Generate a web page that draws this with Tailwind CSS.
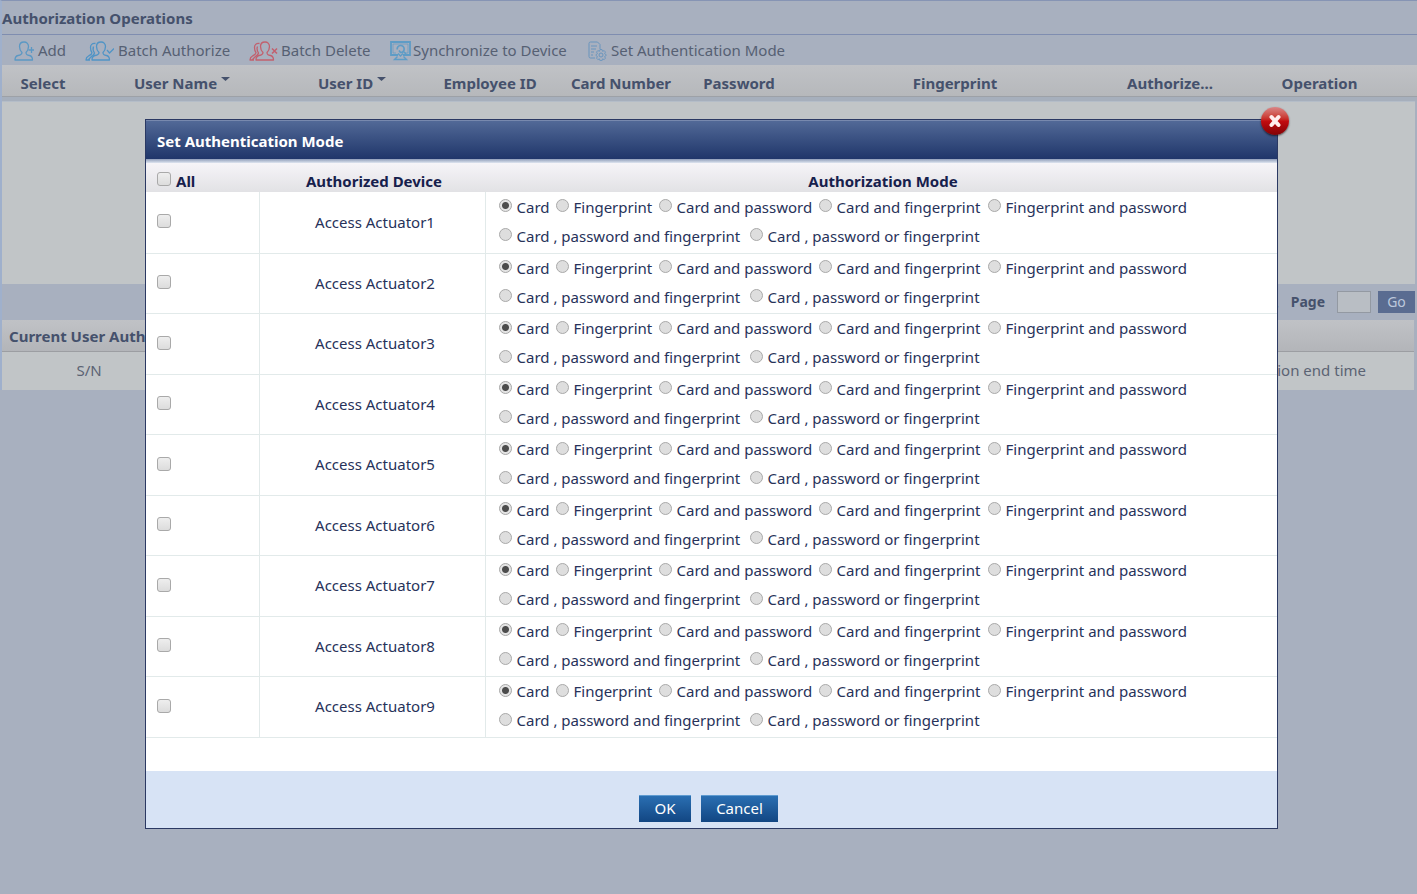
<!DOCTYPE html>
<html lang="en">
<head>
<meta charset="utf-8">
<title>Authorization Operations</title>
<script src="https://cdn.jsdelivr.net/npm/@tailwindcss/browser@4"></script>
</head>
<body class="min-h-screen overflow-x-hidden bg-[#a8b0bf] font-['Noto_Sans','Open_Sans',sans-serif] text-[15px] text-[#4f5a70]">
<svg class="hidden" aria-hidden="true">
  <defs>
    <g id="person" fill="none" stroke="currentColor" stroke-width="1.3" stroke-linejoin="round">
      <path d="M10 1C7.500 1 5.500 2.500 5.500 5.500C5.500 8.500 6.500 10 8 11.500C8 13.500 7 14 4 14.500C1.500 15 1 16 1 19H18.500C18.500 16 18 15 15.500 14.500C12.500 14 12 13.500 12 11.500C13.500 10 14.500 8.500 14.500 5.500C14.500 2.500 12.500 1 10 1Z"/>
    </g>
    <path id="person-back" fill="none" stroke="currentColor" stroke-width="1.3" stroke-linejoin="round" d="M10.500 2.500C7 2 5.500 4 5.500 6.500C5.500 9 6 10.500 7 11.500C7 13.500 5.500 14 3.500 15C1.500 16 1 17 1 19H5M8.500 5.500C7.500 8 8.500 10.500 9.500 12C9 14 8 14 6.500 15.500L3 19"/>
  </defs>
</svg>

<main class="border-t border-l-2 border-t-[#8694b4] border-l-[#9fb0cc]">
  <h1 class="flex h-[34px] items-center border-b border-[#7f8db0] pt-px font-bold text-[#45516c]">Authorization Operations</h1>
  <nav class="flex h-[30px] items-center pt-px pl-3 text-[#566073]" aria-label="Operations">
    <button class="flex w-[71px] items-center gap-1 whitespace-nowrap">
      <svg class="h-5 w-5 shrink-0 text-[#5b98c4]" viewBox="0 0 20 20"><use href="#person"/><path d="M17.500 6v6M14.500 9h5.500" stroke="currentColor" stroke-width="1.300"/></svg>Add</button>
    <button class="flex w-[164px] items-center gap-1 whitespace-nowrap">
      <svg class="h-5 w-[29px] shrink-0 text-[#5094c6]" viewBox="0 0 29 20"><use href="#person-back"/><use href="#person" x="6"/><path d="M22 9l2.500 3L29 7.500" fill="none" stroke="currentColor" stroke-width="1.300"/></svg>Batch Authorize</button>
    <button class="flex w-[141px] items-center gap-[3px] whitespace-nowrap">
      <svg class="h-5 w-[29px] shrink-0 text-[#c2606e]" viewBox="0 0 29 20"><use href="#person-back"/><use href="#person" x="6"/><path d="M23 7.500l5 5M28 7.500l-5 5" stroke="currentColor" stroke-width="1.500"/></svg>Batch Delete</button>
    <button class="flex w-[198px] items-center gap-[2px] whitespace-nowrap">
      <svg class="h-5 w-[21px] shrink-0 text-[#5e9cc6]" viewBox="0 0 21 20" fill="none" stroke="currentColor"><path d="M8 14H1V1h19v13h-7" stroke-width="1.800"/><path d="M6 12H3V3h15v9h-3" stroke-width=".7"/><path d="M7.200 8.500A3.500 3.500 0 1 1 10.500 11.500L9 9.500M13 10l3 3" stroke-width="1.700"/><path d="M7.500 15.500L4.500 18.500H16.500L13.500 15.500M8 12.500L10.500 15L13 12.500" stroke-width="1.400"/></svg>Synchronize to Device</button>
    <button class="flex items-center gap-1 whitespace-nowrap">
      <svg class="h-5 w-[19px] shrink-0 text-[#6894bd]" viewBox="0 0 19 20" fill="none" stroke="currentColor"><path d="M7 17H2.500Q1 17 1 15.500V2.500Q1 1 2.500 1H9.500L12 3.500V8M3 5h6M3 8h5M3 11h3M3 14h2"/><path d="M12 8.500h2l.5 1.800 1.700-.7 1.300 1.500-1 1.500 1.600 1v1l-1.600 1 1 1.500-1.300 1.500-1.700-.7-.5 1.800h-2l-.5-1.800-1.700.7-1.300-1.500 1-1.500-1.500-1v-1l1.500-1-1-1.500 1.300-1.500 1.700.7z" stroke-width=".9"/><circle cx="13" cy="14" r="2"/></svg>Set Authentication Mode</button>
  </nav>

  <table class="w-full table-fixed">
    <colgroup><col class="w-[82px]"><col class="w-[196px]"><col class="w-[144px]"><col class="w-[132px]"><col class="w-[130px]"><col class="w-[106px]"><col class="w-[326px]"><col class="w-[104px]"><col class="w-[195px]"></colgroup>
    <thead class="bg-linear-to-b from-[#c0c2c6] to-[#b6b8bb] text-[#45516c]">
      <tr class="h-[31px] border-b border-[#9da1a7] *:p-0 *:pt-[6px]">
        <th>Select</th>
        <th><span class="inline-flex items-start gap-1">User Name<svg class="mt-[5px] h-1 w-[9px]" viewBox="0 0 9 4"><path d="M0 0h9L4.500 4z" fill="currentColor"/></svg></span></th>
        <th><span class="inline-flex items-start gap-1">User ID<svg class="mt-[5px] h-1 w-[9px]" viewBox="0 0 9 4"><path d="M0 0h9L4.500 4z" fill="currentColor"/></svg></span></th>
        <th>Employee ID</th><th>Card Number</th><th>Password</th><th>Fingerprint</th><th>Authorize...</th><th>Operation</th>
      </tr>
    </thead>
  </table>
  <div class="h-1 bg-[#a6afbc]"></div>
  <div class="mr-[2px] h-[183px] border-t border-[#b4bdc8] bg-[#c1c5c7]"></div>

  <form class="flex h-9 items-center justify-end gap-3 pt-px pr-[2px]">
    <span class="font-bold">.</span>
    <label for="page" class="text-sm font-bold text-[#45516c]">Page</label>
    <span class="flex items-center gap-[7px]">
      <input id="page" type="text" class="h-[22px] w-[34px] border border-[#9399a2] bg-[#b9bec4] px-1">
      <button type="button" class="h-[22px] w-[37px] bg-[#5a6c91] text-sm text-[#bcc8dc]">Go</button>
    </span>
  </form>

  <section class="mr-[3px]">
    <h2 class="flex h-8 items-center border-b border-[#9c9ea2] bg-linear-to-b from-[#c0c2c6] to-[#b3b5b9] pt-[3px] pl-[7px] font-bold text-[#45516c]">Current User Authorization</h2>
    <table class="w-full table-fixed bg-[#c1c5c7]">
      <tr class="h-[38px] text-[#5b6373] *:font-normal"><th class="w-[174px]">S/N</th><th></th><th class="pr-12 text-right">Authorization end time</th></tr>
    </table>
  </section>
</main>

<!-- Modal layer -->
<div class="absolute inset-x-0 top-[119px] pr-[139px] pl-[145px]">
  <section role="dialog" aria-labelledby="dialog-title" class="relative border border-[#2b3963] bg-white text-[#27325a]">
    <header class="flex h-[39px] items-center border-t border-[#7889ae] bg-linear-to-b from-[#526997] to-[#20366a] pt-[2px] pl-[11px] text-white">
      <h2 id="dialog-title" class="font-bold">Set Authentication Mode</h2>
    </header>
    <button aria-label="Close" class="absolute -top-[13px] -right-[12px] h-7 w-7 rounded-full bg-linear-to-b from-[#d98586] via-[#c30c10] to-[#820306] shadow-[0_1px_2px_#00000099]">
      <svg viewBox="0 0 28 28" class="h-7 w-7"><path d="M10.500 10l7 8M17.500 10l-7 8" stroke="#ffeded" stroke-width="4" stroke-linecap="round"/></svg>
    </button>
    <div class="h-1 bg-linear-to-b from-[#8f9db9] to-[#dfe5f0]"></div>
    <table class="w-full table-fixed">
      <colgroup><col class="w-[113px]"><col class="w-[226px]"><col></colgroup>
      <thead class="bg-linear-to-b from-[#f6f4f8] to-[#e2e2e5] text-[#16204c]">
        <tr class="h-[29px] *:p-0 *:pt-[6px] *:leading-[22px]">
          <th><label class="flex items-center gap-[5px] pl-[11px]"><input type="checkbox" class="mb-1 h-[14px] w-[14px] appearance-none rounded-[3px] border border-[#a9a9a9] bg-linear-to-b from-[#eeeeee] to-[#dcdcdc]">All</label></th>
          <th class="pl-1!">Authorized Device</th>
          <th class="pl-1!">Authorization Mode</th>
        </tr>
      </thead>
      <tbody id="devices"></tbody>
    </table>
    <footer class="mt-[33px] flex h-[57px] items-end justify-center gap-[10px] bg-[#d7e3f5] pr-[6px] pb-[6px]">
      <button class="h-[27px] w-[52px] border-t border-[#5f9bd0] bg-linear-to-b from-[#2a6fb2] to-[#124683] text-white">OK</button>
      <button class="h-[27px] w-[77px] border-t border-[#5f9bd0] bg-linear-to-b from-[#2a6fb2] to-[#124683] text-white">Cancel</button>
    </footer>
  </section>
</div>

<script>
const modes = [
  ['Card', 'w-[57px]'], ['Fingerprint', 'w-[103px]'], ['Card and password', 'w-[160px]'],
  ['Card and fingerprint', 'w-[169px]'], ['Fingerprint and password', 'w-[280px]'],
  ['Card , password and fingerprint', 'w-[251px]'], ['Card , password or fingerprint', 'w-[230px]']
];
const radios = n => modes.map(([name, width], i) =>
  `<label class="flex h-[29px] items-center gap-[5px] whitespace-nowrap ${width}"><input type="radio" name="mode${n}" ${i === 0 ? 'checked' : ''} class="mb-[3px] h-[13px] w-[13px] shrink-0 appearance-none rounded-full border border-[#a9a9a9] bg-[#dedede] checked:bg-[radial-gradient(circle,#4c4c4c_0_3px,#e4e4e4_4px)]">${name}</label>`).join('');
document.getElementById('devices').innerHTML = Array.from({length: 9}, (_, k) => k + 1).map(n => `
  <tr class="border-b border-[#e2eaea] odd:h-[61px] even:h-[60px]">
    <td class="border-r border-[#e2eaea] p-0 pb-[2px] pl-[11px]"><input type="checkbox" aria-label="Select Access Actuator${n}" class="block h-[14px] w-[14px] appearance-none rounded-[3px] border border-[#a9a9a9] bg-linear-to-b from-[#eeeeee] to-[#dcdcdc]"></td>
    <td class="border-r border-[#e2eaea] p-0 pl-[6px] text-center">Access Actuator${n}</td>
    <td class="p-0 pb-px pl-[13px]"><div class="flex max-w-[770px] flex-wrap">${radios(n)}</div></td>
  </tr>`).join('');
</script>
</body>
</html>
